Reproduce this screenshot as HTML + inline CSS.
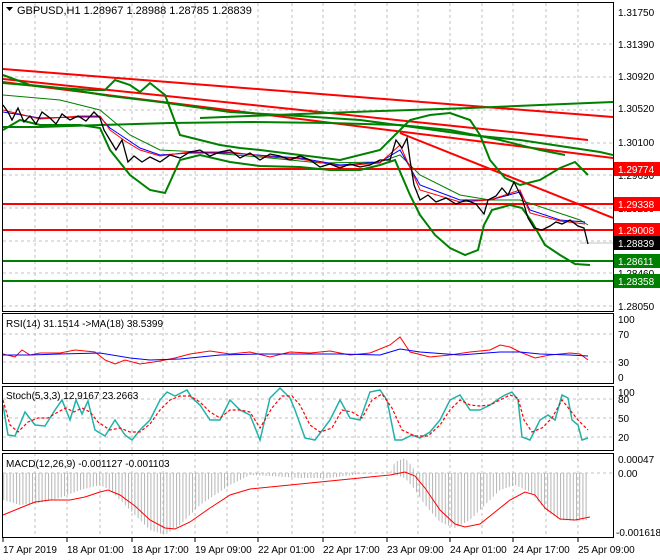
<!DOCTYPE html>
<html><head><meta charset="utf-8"><style>
html,body{margin:0;padding:0;background:#fff;width:660px;height:560px;overflow:hidden}
text{font-family:"Liberation Sans",sans-serif;font-size:10px;fill:#000}
</style></head><body>
<svg width="660" height="560" viewBox="0 0 660 560" xmlns="http://www.w3.org/2000/svg">
<defs>
<pattern id="hist" width="3.2" height="10" patternUnits="userSpaceOnUse"><rect x="0" y="0" width="1" height="10" fill="#b4b4b4"/></pattern>
<clipPath id="cm"><rect x="3" y="3" width="610" height="308"/></clipPath>
</defs>
<rect width="660" height="560" fill="#fff"/>
<g stroke="#c0c0c0" stroke-dasharray="3,3" stroke-width="1">
<path d="M35 3V537M67 3V537M100 3V537M132 3V537M163 3V537M195 3V537M227 3V537M258 3V537M292 3V537M323 3V537M355 3V537M387 3V537M418 3V537M450 3V537M482 3V537M513 3V537M546 3V537M578 3V537"/>
<path d="M3 44H613M3 77H613M3 110H613M3 143H613M3 175H613M3 208H613M3 241H613M3 273H613M3 306H613"/>
<path d="M3 334H613M3 362H613M3 399H613M3 418H613M3 437H613M3 473H613"/>
</g>
<g clip-path="url(#cm)" fill="none">
<line x1="3" y1="169" x2="613" y2="169" stroke="#f00" stroke-width="2"/>
<line x1="3" y1="204" x2="613" y2="204" stroke="#f00" stroke-width="2"/>
<line x1="3" y1="230" x2="613" y2="230" stroke="#f00" stroke-width="2"/>
<line x1="3" y1="261" x2="613" y2="261" stroke="#008000" stroke-width="2"/>
<line x1="3" y1="281" x2="613" y2="281" stroke="#008000" stroke-width="2"/>
<line x1="580" y1="243" x2="613" y2="243" stroke="#c0c0c0"/>
<line x1="3" y1="69" x2="613" y2="117" stroke="#f00" stroke-width="2"/>
<line x1="3" y1="79" x2="588" y2="140" stroke="#f00" stroke-width="2"/>
<line x1="3" y1="82" x2="613" y2="158" stroke="#f00" stroke-width="2"/>
<line x1="400" y1="133" x2="613" y2="218" stroke="#f00" stroke-width="2"/>
<g stroke="#008000" stroke-width="2">
<polyline points="3,83 60,88 110,96 160,102 230,112 300,116 360,120 420,128 470,135 520,140 560,146 600,152 613,155"/>
<polyline points="200,118 300,114 380,111 470,108 540,105 613,102"/>
<polyline points="3,127 40,127 100,125 170,123 250,122 330,123 400,125 450,130 500,140 540,150 565,155"/>
<polyline points="3,75 30,85 60,88 90,90 105,90 115,80 130,85 140,92 150,83 165,95 180,135 200,140 220,145 240,148 260,150 300,155 340,160 380,150 400,130 410,120 430,115 450,113 470,120 480,135 490,160 505,178 520,185 540,180 560,168 575,162 588,175"/>
<polyline points="3,130 20,120 40,125 60,125 80,125 100,128 110,150 130,175 150,190 165,193 180,160 200,155 230,162 260,166 300,167 330,170 360,170 380,165 395,160 410,195 420,215 435,235 450,248 465,255 478,250 484,225 492,210 510,205 522,208 532,222 545,245 560,255 575,264 590,265"/>
<polyline points="3,95 60,100 100,110 130,135 160,150 200,152 260,157 320,163 380,162 400,155 420,175 460,195 490,200 520,200 550,210 580,220 588,225" stroke-width="1"/>
</g>
<polyline points="3,112 40,118 80,117 100,117 110,128 125,138 140,148 160,155 190,153 230,153 270,156 300,158 340,165 380,162 400,150 420,185 460,200 490,200 520,192 530,210 560,220 585,222" stroke="#00f" stroke-width="1"/>
<polyline points="3,110 40,119 80,116 100,116 110,130 125,141 140,150 160,156 190,152 230,152 270,157 300,159 340,166 380,163 400,145 420,190 460,202 490,200 520,190 530,213 560,221 585,224" stroke="#f00" stroke-width="1"/>
<polyline points="3,105 8,112 12,120 18,108 24,122 30,116 36,124 42,112 50,118 56,124 62,114 70,120 78,116 86,121 94,112 100,118 104,130 110,140 116,150 122,140 128,162 134,156 142,162 150,157 160,162 170,155 180,158 190,152 200,150 210,156 220,152 230,150 240,158 250,153 260,160 270,154 280,156 290,160 300,156 310,160 320,167 330,164 340,168 350,164 360,167 370,165 380,160 390,160 396,140 402,148 407,138 410,160 414,185 420,200 428,195 436,202 446,198 456,204 466,200 476,204 484,214 488,200 496,196 502,188 508,195 514,182 518,190 522,198 528,218 534,228 542,230 550,226 556,222 562,224 570,220 578,226 584,228 588,244" stroke="#000" stroke-width="1.3"/>
</g>
<polyline fill="none" stroke="#f00" points="3,354 15,357 22,350 30,355 40,353 60,353 75,350 95,352 105,360 115,364 125,360 140,364 160,361 175,358 190,354 210,351 230,354 250,352 270,357 290,352 310,353 330,351 350,355 370,353 390,345 400,337 410,352 430,357 450,355 470,352 490,350 500,345 510,347 520,352 535,358 550,355 570,353 580,354 588,360"/>
<polyline fill="none" stroke="#00f" points="3,355 30,355 60,354 100,353 130,358 150,360 180,359 220,355 260,354 300,354 340,354 380,355 400,349 420,352 460,355 500,352 520,352 540,354 570,355 588,356"/>
<polyline fill="none" stroke="#20b2aa" stroke-width="1.5" points="3,405 8,435 15,436 25,412 35,425 45,426 55,410 62,400 70,420 76,400 82,414 88,401 95,430 105,436 115,420 125,435 132,440 140,430 150,420 160,400 167,392 175,396 187,390 192,398 200,405 210,420 220,420 230,400 240,410 250,415 260,440 270,398 280,388 290,398 295,410 305,438 315,440 330,420 340,400 350,418 360,420 370,392 380,390 387,400 395,440 402,440 412,435 420,438 430,432 440,420 450,400 460,395 470,410 480,410 490,405 500,398 505,395 512,392 518,400 522,437 530,440 540,420 548,415 555,420 562,395 568,398 572,420 578,425 582,440 588,438"/>
<polyline fill="none" stroke="#f00" stroke-dasharray="3,2" stroke-width="1.2" points="3,400 10,425 18,432 28,422 38,418 48,418 58,412 66,408 74,412 82,408 90,412 98,422 110,430 120,428 130,432 140,432 150,424 160,410 170,400 180,396 190,396 200,402 210,412 220,418 230,410 240,410 250,412 260,428 272,408 282,396 292,396 300,405 310,425 320,432 332,428 342,410 352,412 362,418 372,400 382,394 392,408 402,430 415,436 428,436 440,425 450,410 460,400 470,405 480,406 490,405 500,400 510,395 518,398 524,420 532,432 542,428 552,418 562,400 570,410 578,420 588,430"/>
<path d="M3 473H390L395 462L405 458L412 466L416 473H588V520L575 521L560 520L545 510L530 492L515 485L500 490L485 505L470 520L455 528L440 522L425 505L415 490L405 478L390 473L360 474L330 478L300 478L270 476L250 475L230 485L200 505L180 525L165 535L150 530L130 510L110 490L100 485L80 490L60 498L40 503L20 505L3 500Z" fill="url(#hist)"/>
<polyline fill="none" stroke="#f00" points="3,515 20,508 35,502 50,500 70,500 85,497 100,492 108,490 120,495 135,506 150,520 165,528 175,529 190,522 210,508 230,495 250,489 270,487 320,482 360,478 390,475 405,472 415,476 425,488 440,510 455,524 465,527 480,524 495,512 510,500 525,492 535,495 545,508 560,519 575,520 590,517"/>
<g fill="none" stroke="#000">
<rect x="2.5" y="2.5" width="611" height="309"/>
<rect x="2.5" y="313.5" width="611" height="70"/>
<rect x="2.5" y="386.5" width="611" height="64"/>
<rect x="2.5" y="453.5" width="611" height="84"/>
</g>
<g stroke="#000"><path d="M3 538v4M67 538v4M132 538v4M195 538v4M258 538v4M323 538v4M387 538v4M450 538v4M513 538v4M578 538v4"/></g>
<path d="M6 7h7l-3.5 4z" fill="#000"/>
<text x="17" y="14" style="font-size:11px">GBPUSD,H1  1.28967 1.28988 1.28785 1.28839</text>
<text x="6" y="327">RSI(14) 31.1514  -&gt;MA(18) 38.5399</text>
<text x="6" y="399">Stoch(5,3,3) 12.9167 23.2663</text>
<text x="6" y="467">MACD(12,26,9) -0.001127 -0.001103</text>
<g>
<text x="618" y="16">1.31750</text>
<text x="618" y="48">1.31390</text>
<text x="618" y="80">1.30920</text>
<text x="618" y="112">1.30520</text>
<text x="618" y="146">1.30100</text>
<text x="618" y="179">1.29690</text>
<text x="618" y="212">1.29280</text>
<text x="618" y="277">1.28460</text>
<text x="618" y="310">1.28050</text>
<text x="618" y="323">100</text>
<text x="618" y="338">70</text>
<text x="618" y="366">30</text>
<text x="618" y="381">0</text>
<text x="618" y="396">100</text>
<text x="618" y="403">80</text>
<text x="618" y="422">50</text>
<text x="618" y="441">20</text>
<text x="618" y="463">0.00047</text>
<text x="618" y="477">0.00</text>
<text x="616" y="536">-0.001618</text>
</g>
<rect x="614" y="162" width="46" height="14" fill="#f00"/><text x="618" y="173" style="fill:#fff">1.29774</text>
<rect x="614" y="197" width="46" height="14" fill="#f00"/><text x="618" y="208" style="fill:#fff">1.29338</text>
<rect x="614" y="223" width="46" height="14" fill="#f00"/><text x="618" y="234" style="fill:#fff">1.29008</text>
<rect x="614" y="236" width="46" height="14" fill="#000"/><text x="618" y="247" style="fill:#fff">1.28839</text>
<rect x="614" y="254" width="46" height="14" fill="#008000"/><text x="618" y="265" style="fill:#fff">1.28611</text>
<rect x="614" y="274" width="46" height="14" fill="#008000"/><text x="618" y="285" style="fill:#fff">1.28358</text>
<text x="3" y="553">17 Apr 2019</text>
<text x="67" y="553">18 Apr 01:00</text>
<text x="132" y="553">18 Apr 17:00</text>
<text x="195" y="553">19 Apr 09:00</text>
<text x="258" y="553">22 Apr 01:00</text>
<text x="323" y="553">22 Apr 17:00</text>
<text x="387" y="553">23 Apr 09:00</text>
<text x="450" y="553">24 Apr 01:00</text>
<text x="513" y="553">24 Apr 17:00</text>
<text x="578" y="553">25 Apr 09:00</text>
</svg>
</body></html>
